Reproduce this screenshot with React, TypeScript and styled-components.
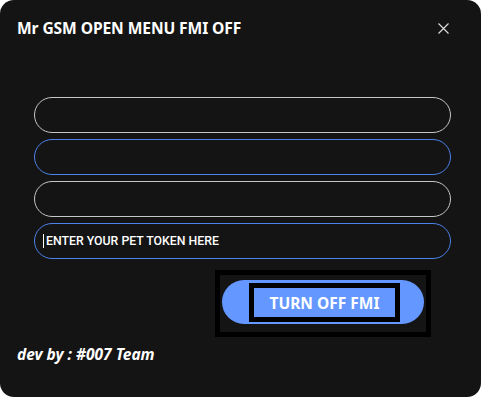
import React from "react";
import styled, { createGlobalStyle } from "styled-components";

const Global = createGlobalStyle`
  html, body {
    margin: 0;
    padding: 0;
    background: #ffffff;
    overflow: hidden;
  }
`;

const Window = styled.div`
  width: 481px;
  height: 397px;
  background: #141414;
  border-radius: 14px;
  display: flex;
  flex-direction: column;
  font-family: "Noto Sans", "Open Sans", sans-serif;
  color: #ffffff;
  box-sizing: border-box;
`;

const Header = styled.div`
  height: 56px;
  padding: 0 31px 0 17px;
  display: flex;
  align-items: center;
  justify-content: space-between;
`;

const Title = styled.h1`
  margin: 0;
  font-size: 15.6px;
  font-weight: 700;
  letter-spacing: -0.1px;
`;

const Close = styled.button`
  background: none;
  border: none;
  padding: 0;
  width: 14px;
  height: 14px;
  display: flex;
  align-items: center;
  justify-content: center;
  color: #e0e0e0;
  cursor: pointer;
`;

const Form = styled.div`
  margin-top: 41px;
  padding: 0 30px 0 34px;
  display: flex;
  flex-direction: column;
  gap: 6px;
`;

const Field = styled.div<{ $accent?: boolean }>`
  height: 36px;
  box-sizing: border-box;
  border: 1px solid ${(p) => (p.$accent ? "#4d82ea" : "#c6c6c6")};
  border-radius: 18px;
  display: flex;
  align-items: center;
  padding-left: 8px;
  font-family: Roboto, "Noto Sans", sans-serif;
  font-size: 12.3px;
  font-weight: 500;
`;

const Caret = styled.span`
  display: inline-block;
  width: 1px;
  height: 14px;
  background: #ffffff;
  margin-right: 2px;
`;

const Actions = styled.div`
  display: flex;
  justify-content: flex-end;
  padding-right: 50px;
  margin-top: 11px;
`;

const Frame = styled.div`
  border: 5px solid #000000;
  padding: 5px 2px 8px 2px;
`;

const Pill = styled.div`
  width: 202px;
  height: 44px;
  background: #6497ff;
  border-radius: 22px;
  display: flex;
  justify-content: center;
  align-items: flex-start;
  padding-top: 3px;
  box-sizing: border-box;
`;

const ActionButton = styled.button`
  width: 151px;
  height: 39px;
  box-sizing: border-box;
  border: 5px solid #000000;
  background: #6497ff;
  color: #ffffff;
  font-family: "Noto Sans", "Open Sans", sans-serif;
  font-size: 15.5px;
  font-weight: 700;
  padding: 0;
  margin-left: 3px;
  cursor: pointer;
`;

const Footer = styled.div`
  margin-top: 6px;
  padding-left: 17px;
  font-size: 15.5px;
  font-weight: 700;
  font-style: italic;
`;

export default function App() {
  return (
    <>
      <Global />
      <Window>
        <Header>
          <Title>Mr GSM OPEN MENU FMI OFF</Title>
          <Close aria-label="close">
            <svg width="11" height="11" viewBox="0 0 11 11">
              <path d="M0.5 0.5 L10.5 10.5 M10.5 0.5 L0.5 10.5" stroke="currentColor" strokeWidth="1.1" />
            </svg>
          </Close>
        </Header>
        <Form>
          <Field />
          <Field $accent />
          <Field />
          <Field $accent>
            <Caret />
            ENTER YOUR PET TOKEN HERE
          </Field>
        </Form>
        <Actions>
          <Frame>
            <Pill>
              <ActionButton>TURN OFF FMI</ActionButton>
            </Pill>
          </Frame>
        </Actions>
        <Footer>dev by : #007 Team</Footer>
      </Window>
    </>
  );
}
